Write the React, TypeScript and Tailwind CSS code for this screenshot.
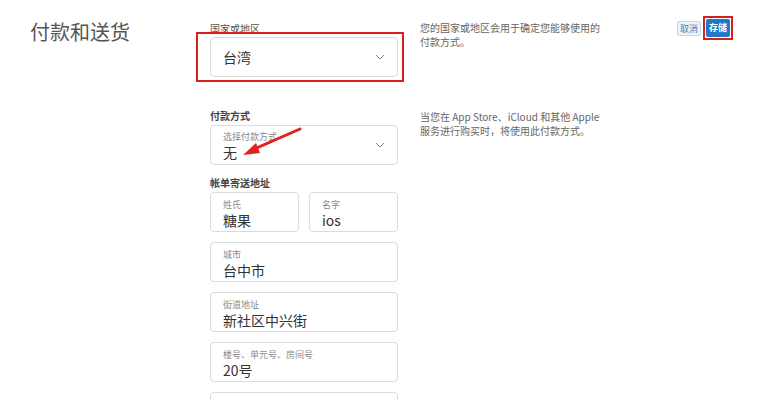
import React from 'react'

const font = { fontFamily: '"Noto Sans CJK SC", "Noto Sans", sans-serif' }

function Chevron() {
  return (
    <svg width="10" height="6" viewBox="0 0 10 6" className="shrink-0">
      <path d="M1 1 L5 5 L9 1" fill="none" stroke="#8a8a8a" strokeWidth="1" />
    </svg>
  )
}

function Field({ label, value, className = '' }: { label: string; value: string; className?: string }) {
  return (
    <div className={`h-[40px] rounded-[4px] border border-[#dadada] px-[12px] pt-[6px] ${className}`}>
      <div className="text-[9px] leading-[12px] text-[#8a8a8a]">{label}</div>
      <div className="text-[14px] leading-[18px] text-[#333]">{value}</div>
    </div>
  )
}

export default function App() {
  return (
    <div className="relative h-[400px] w-[759px] overflow-hidden bg-white" style={font}>
      <div className="flex">
        <div className="w-[210px] shrink-0 pl-[30px] pt-[19px]">
          <h1 className="text-[20px] leading-[26px] text-[#555]">付款和送货</h1>
        </div>

        <div className="w-[188px] shrink-0 pt-[23px]">
          <div className="mb-[2px] text-[10px] leading-[12px] text-[#555]">国家或地区</div>
          <div className="relative">
            <div className="flex h-[40px] items-center justify-between rounded-[4px] border border-[#dadada] pl-[12px] pr-[12px]">
              <span className="text-[14px] text-[#333]">台湾</span>
              <Chevron />
            </div>
            <div className="pointer-events-none absolute -top-[5px] -bottom-[5px] -left-[14px] -right-[6px] border-2 border-[#d4201f]" />
          </div>

          <div className="mt-[33px] mb-[3px] text-[10px] font-bold leading-[12px] text-[#444]">付款方式</div>
          <div className="relative flex h-[40px] items-center justify-between rounded-[4px] border border-[#dadada] px-[12px]">
            <div className="pt-[1px]">
              <div className="text-[9px] leading-[12px] text-[#8a8a8a]">选择付款方式</div>
              <div className="text-[14px] leading-[18px] text-[#333]">无</div>
            </div>
            <Chevron />
            <svg className="absolute left-[26px] top-[0px]" width="68" height="34" viewBox="0 0 68 34">
              <path d="M63 3 L15 24" stroke="#e0241f" strokeWidth="3" strokeLinecap="round" />
              <path d="M6 29 L19 17 L23 27 Z" fill="#e0241f" />
            </svg>
          </div>

          <div className="mt-[12px] mb-[3px] text-[10px] font-bold leading-[12px] text-[#444]">帐单寄送地址</div>
          <div className="flex flex-col gap-[10px]">
            <div className="flex gap-[10px]">
              <Field label="姓氏" value="糖果" className="flex-1" />
              <Field label="名字" value="ios" className="flex-1" />
            </div>
            <Field label="城市" value="台中市" />
            <Field label="街道地址" value="新社区中兴街" />
            <Field label="楼号、单元号、房间号" value="20号" />
            <Field label="邮编" value="" />
          </div>
        </div>

        <div className="ml-[22px] w-[190px] shrink-0 text-[10px] leading-[14px] text-[#666]">
          <p className="pt-[21px]">
            您的国家或地区会用于确定您能够使用的
            <br />
            付款方式。
          </p>
          <p className="pt-[61px]">
            当您在 App Store、iCloud 和其他 Apple
            <br />
            服务进行购买时，将使用此付款方式。
          </p>
        </div>

        <div className="ml-[67px] flex h-[40px] items-start gap-[5px] pt-[19px]">
          <button className="mt-[2px] flex h-[15px] items-center rounded-[2px] border border-[#cfd6de] bg-[#eef2f6] px-[2px] text-[9px] leading-[13px] text-[#4a7fb5]">
            取消
          </button>
          <div className="relative flex">
            <button className="flex h-[18px] items-center rounded-[2px] bg-[#1f78c8] px-[3px] text-[9px] font-bold leading-[18px] text-white">
              存储
            </button>
            <div className="pointer-events-none absolute -top-[3px] -bottom-[3px] -left-[3px] -right-[3px] border-2 border-[#d4201f]" />
          </div>
        </div>
      </div>
    </div>
  )
}
